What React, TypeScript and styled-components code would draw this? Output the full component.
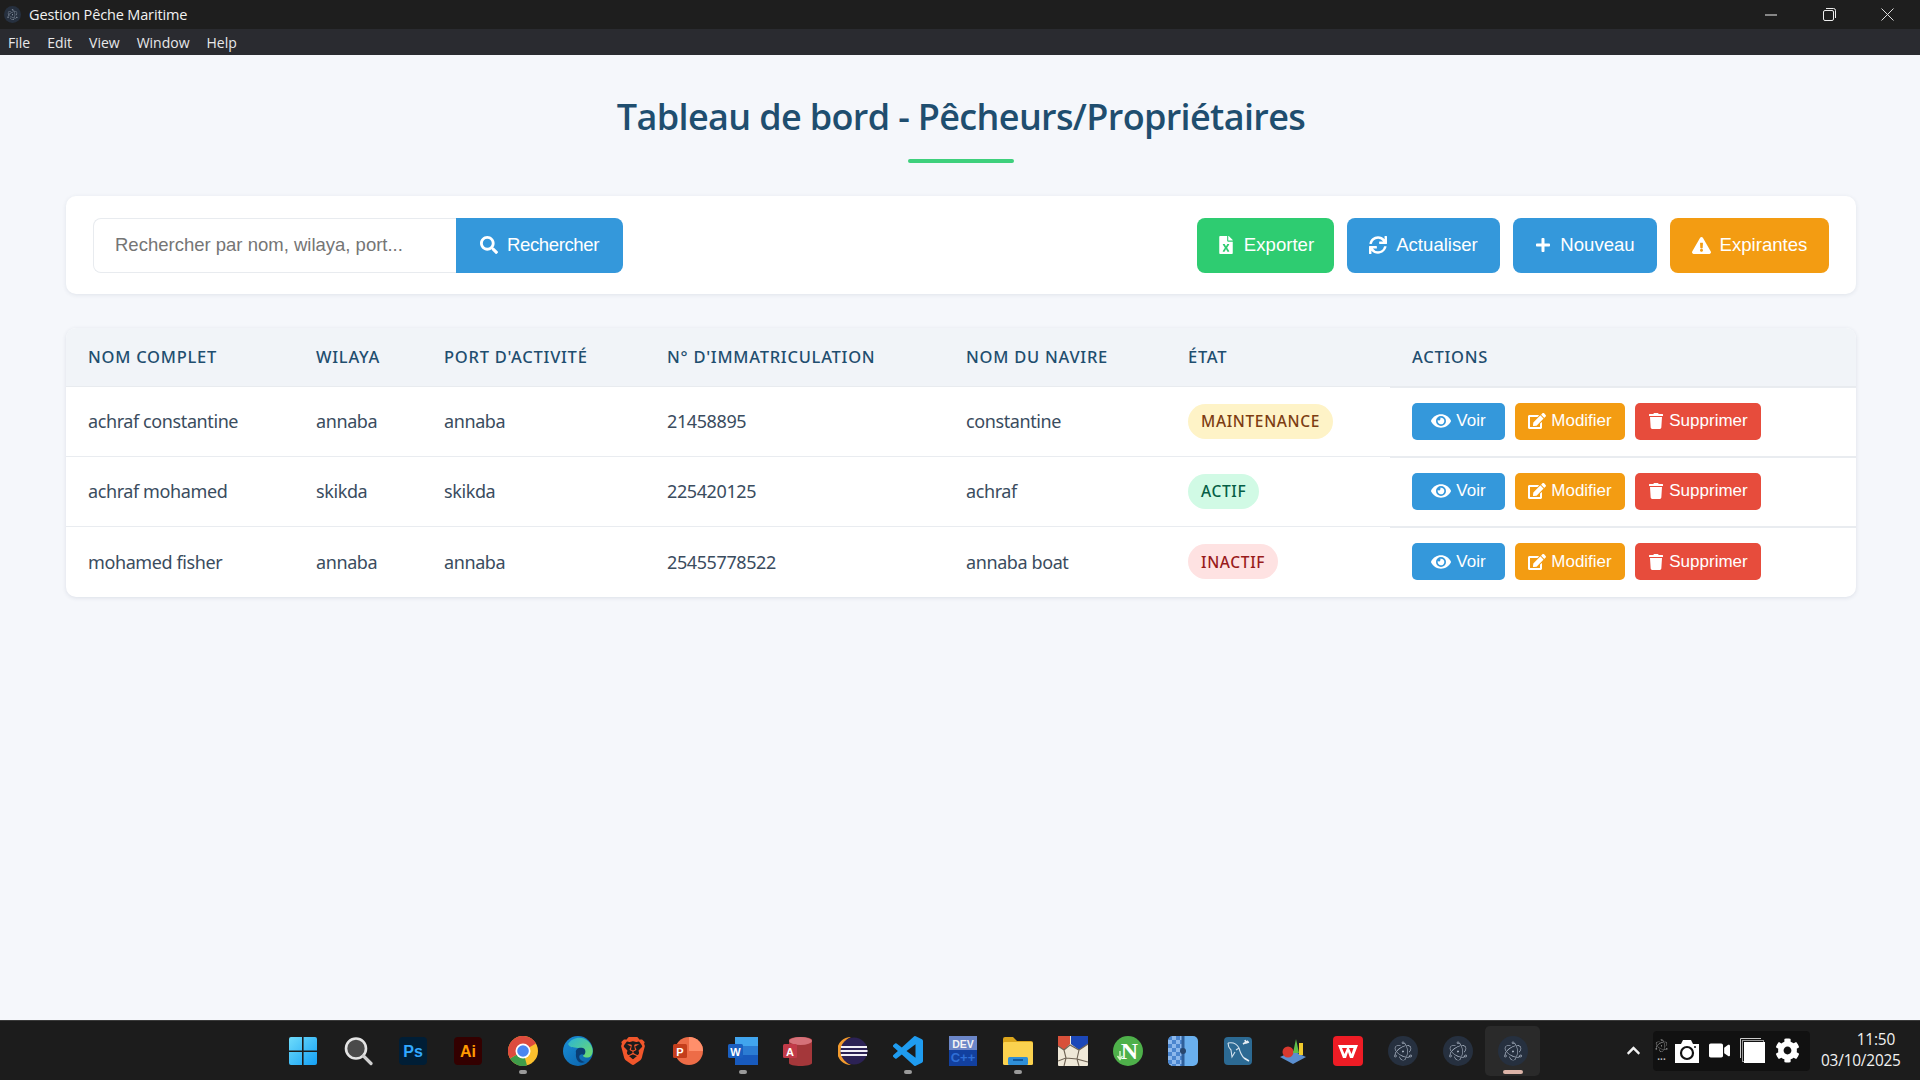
import React from "react"
import styled, { createGlobalStyle } from "styled-components"
import { FaSearch, FaFileExcel, FaSync, FaPlus, FaExclamationTriangle, FaEye, FaEdit, FaTrash, FaVideo, FaCog, FaChevronUp } from "react-icons/fa"
import { SiElectron, SiBrave } from "react-icons/si"

const colors = {
    blue: "#3498db",
    green: "#2ecc71",
    orange: "#f39c12",
    red: "#e74c3c",
    navy: "#1f4e6f",
    ink: "#3a4c5e",
}

const Global = createGlobalStyle`
    html, body { margin: 0; padding: 0; height: 100%; }
    body { background: #f5f7fb; font-family: "Noto Sans", sans-serif; }
    * { box-sizing: border-box; }
`

const Window = styled.div`
    display: flex;
    flex-direction: column;
    width: 1920px;
    height: 1080px;
    overflow: hidden;
`
const TitleBar = styled.div`
    display: flex;
    align-items: center;
    height: 29px;
    padding: 0 4px;
    background: #1e1e1e;
    color: #f2f2f2;
    font: 14.5px "Open Sans", sans-serif;
    letter-spacing: -0.15px;
`
const TitleText = styled.span`
    margin-left: 8px;
    flex: 1;
`
const WinButton = styled.div`
    display: flex;
    align-items: center;
    justify-content: center;
    width: 58px;
    height: 29px;
`
const MenuBar = styled.div`
    display: flex;
    align-items: center;
    gap: 17px;
    height: 26px;
    padding-left: 8px;
    background: #2a2b30;
    color: #e8e8ea;
    font: 14px "Open Sans", sans-serif;
`
const Main = styled.main`
    flex: 1;
    padding: 0 64px 0 66px;
    background: #f5f7fb;
`
const Heading = styled.h1`
    margin: 33px 0 33px;
    color: ${colors.navy};
    font: 600 36px/58px "Open Sans", sans-serif;
    letter-spacing: -0.65px;
    text-align: center;
    &::after {
        content: "";
        display: block;
        width: 106px;
        height: 4px;
        margin: 13px auto 0;
        border-radius: 2px;
        background: ${colors.green};
        opacity: 0.92;
    }
`
const Toolbar = styled.section`
    display: flex;
    justify-content: space-between;
    align-items: center;
    height: 98px;
    padding: 0 27px;
    margin-bottom: 34px;
    background: #fff;
    border-radius: 10px;
    box-shadow: 0 1px 4px rgba(40, 60, 90, 0.1);
`
const SearchGroup = styled.div`
    display: flex;
    height: 55px;
`
const SearchInput = styled.input`
    width: 363px;
    height: 55px;
    padding: 0 21px;
    border: 1px solid #e8ebef;
    border-right: 0;
    border-radius: 8px 0 0 8px;
    outline: none;
    font: 18.5px "Liberation Sans", sans-serif;
    color: #333;
    &::placeholder { color: #757575; opacity: 1; }
`
const ActionGroup = styled.div`
    display: flex;
    gap: 13px;
`
const ToolButton = styled.button<{ $bg: string; $w: number; $joined?: boolean }>`
    display: flex;
    align-items: center;
    justify-content: center;
    gap: 9px;
    width: ${p => p.$w}px;
    height: 55px;
    border: 0;
    border-radius: ${p => (p.$joined ? "0 8px 8px 0" : "8px")};
    background: ${p => p.$bg};
    color: #fff;
    font: 18.6px "Liberation Sans", sans-serif;
    letter-spacing: ${p => (p.$joined ? "-0.4px" : "0")};
`
const TableCard = styled.section`
    background: #fff;
    border-radius: 10px;
    overflow: hidden;
    box-shadow: 0 1px 4px rgba(40, 60, 90, 0.12);
`
const Table = styled.table`
    width: 100%;
    table-layout: fixed;
    border-collapse: collapse;
`
const HeadCell = styled.th`
    height: 58px;
    padding: 0 0 0 22px;
    background: #f1f4f8;
    border-bottom: 1px solid #e8ebef;
    color: ${colors.navy};
    font: 500 16.5px "Noto Sans", sans-serif;
    letter-spacing: 0.75px;
    text-align: left;
    text-transform: uppercase;
`
const Row = styled.tr`
    height: 70px;
    & + & td { border-top: 1px solid #e9ecf0; }
    &:last-child { height: 71px; }
`
const Cell = styled.td`
    padding: 0 0 0 22px;
    color: ${colors.ink};
    font: 18px "Noto Sans", sans-serif;
    letter-spacing: -0.4px;
`
const ActionCell = styled(Cell)`
    box-shadow: inset 0 1px 0 #e9ecf0;
`
const Badge = styled.span<{ $bg: string; $fg: string }>`
    display: inline-flex;
    align-items: center;
    height: 35px;
    padding: 0 13px;
    border-radius: 18px;
    background: ${p => p.$bg};
    color: ${p => p.$fg};
    font: 500 15.5px "Noto Sans", sans-serif;
    letter-spacing: 0.65px;
    text-transform: uppercase;
`
const RowActions = styled.div`
    display: flex;
    gap: 10px;
`
const RowButton = styled.button<{ $bg: string; $w: number }>`
    display: flex;
    align-items: center;
    justify-content: center;
    gap: 5px;
    width: ${p => p.$w}px;
    height: 37px;
    border: 0;
    border-radius: 5px;
    background: ${p => p.$bg};
    color: #fff;
    font: 17px "Liberation Sans", sans-serif;
`
const Taskbar = styled.footer`
    display: flex;
    align-items: center;
    height: 60px;
    padding-left: 275px;
    background: #1c1c1c;
    border-top: 1px solid #3a3a3a;
`
const Slot = styled.div<{ $pip?: boolean; $active?: boolean }>`
    position: relative;
    display: flex;
    align-items: center;
    justify-content: center;
    width: 55px;
    height: 50px;
    border-radius: 5px;
    background: ${p => (p.$active ? "#2a2a2a" : "transparent")};
    &::after {
        content: "";
        display: ${p => (p.$pip || p.$active ? "block" : "none")};
        position: absolute;
        bottom: 2px;
        left: 50%;
        width: ${p => (p.$active ? "20px" : "8px")};
        height: 4px;
        margin-left: ${p => (p.$active ? "-10px" : "-4px")};
        border-radius: 2px;
        background: ${p => (p.$active ? "#dcb4a8" : "#9a9a9a")};
    }
`
const Chevron = styled.div`
    display: flex;
    margin-left: 86px;
    color: #f2f2f2;
`
const Tray = styled.div`
    display: flex;
    align-items: center;
    gap: 10px;
    height: 40px;
    width: 157px;
    margin-left: 12px;
    padding: 0 2px;
    background: #111;
    border-radius: 4px;
    color: #fff;
`
const TrayMini = styled.div`
    display: flex;
    flex-direction: column;
    align-items: center;
    width: 13px;
    margin-right: -3px;
    color: #bbb;
    font: 700 10px/10px "Liberation Sans", sans-serif;
`
const Clock = styled.div`
    margin-left: 11px;
    width: 74px;
    color: #f2f2f2;
    font: 15.4px/21px "Open Sans", sans-serif;
    letter-spacing: -0.2px;
    text-align: right;
    transform: translateY(-1px);
`

const Electron = ({ size = 30 }: { size?: number }) => (
    <svg width={size} height={size} viewBox="0 0 30 30">
        <circle cx="15" cy="15" r="15" fill="#26303f" />
        <g transform="translate(5.4 5.4) scale(0.8)"><SiElectron size={24} color="#c4cedd" /></g>
    </svg>
)

const WinLogo = () => (
    <svg width="30" height="30" viewBox="0 0 30 30">
        <defs>
            <linearGradient id="wg" x1="0" y1="0" x2="1" y2="1">
                <stop offset="0" stopColor="#6fdcfb" />
                <stop offset="1" stopColor="#14a0f5" />
            </linearGradient>
        </defs>
        <path fill="url(#wg)" d="M1 3a2 2 0 0 1 2-2h11v13.4H1zM15.6 1H27a2 2 0 0 1 2 2v11.4H15.6zM1 16h13v13H3a2 2 0 0 1-2-2zM15.6 16H29v11a2 2 0 0 1-2 2H15.6z" />
    </svg>
)
const SearchGlass = () => (
    <svg width="30" height="30" viewBox="0 0 30 30">
        <circle cx="13" cy="12.5" r="10" fill="#4a4a4a" stroke="#e4e4e4" strokeWidth="2.6" />
        <path d="M20.5 20 28 27.5" stroke="#cfcfcf" strokeWidth="3.2" strokeLinecap="round" />
    </svg>
)
const AdobeTile = ({ bg, fg, label }: { bg: string; fg: string; label: string }) => (
    <svg width="28" height="28" viewBox="0 0 28 28">
        <rect width="28" height="28" rx="4" fill={bg} />
        <text x="14" y="20" textAnchor="middle" fontFamily="Liberation Sans" fontWeight="700" fontSize="16" fill={fg}>{label}</text>
    </svg>
)
const Chrome = () => (
    <svg width="30" height="30" viewBox="0 0 30 30">
        <circle cx="15" cy="15" r="15" fill="#fbc02d" />
        <path d="M15 15 2 22.5A15 15 0 0 0 19 29.5z" fill="#3f9c4a" />
        <path d="M15 15 2 22.5A15 15 0 0 1 28 7.5z" fill="#dd4b3e" />
        <circle cx="15" cy="15" r="7.5" fill="#fff" />
        <circle cx="15" cy="15" r="5.8" fill="#4a86f0" />
    </svg>
)
const Edge = () => (
    <svg width="30" height="30" viewBox="0 0 30 30">
        <defs>
            <linearGradient id="eg" x1="0" y1="0" x2="1" y2="1">
                <stop offset="0" stopColor="#1a8fd6" />
                <stop offset="1" stopColor="#0a5fa8" />
            </linearGradient>
            <linearGradient id="eh" x1="0" y1="0" x2="1" y2="1">
                <stop offset="0" stopColor="#2bb3d6" />
                <stop offset="1" stopColor="#6fdc6a" />
            </linearGradient>
        </defs>
        <circle cx="15" cy="15" r="15" fill="url(#eg)" />
        <path d="M5 8C9 1 20-1 26 6c4 5 5 10 2 14-2 2-6 2-8 0 2-2 1-7-5-8-5-1-8 0-10-4z" fill="url(#eh)" />
        <path d="M13 17c-1-4 3-6 7-5 3 1 3 5 1 7-1-1-3-1-4 0-2 2 0 6 5 7-6 3-10-3-9-9z" fill="#0a3d73" />
    </svg>
)
const Powerpoint = () => (
    <svg width="30" height="30" viewBox="0 0 30 30">
        <circle cx="16" cy="15" r="14" fill="#ed6c47" />
        <path d="M16 1a14 14 0 0 1 14 14H16z" fill="#ff8f6b" />
        <rect x="0" y="8" width="14" height="14" rx="1.5" fill="#c43e1c" />
        <text x="7" y="19.5" textAnchor="middle" fontFamily="Liberation Sans" fontWeight="700" fontSize="11" fill="#fff">P</text>
    </svg>
)
const Word = () => (
    <svg width="30" height="30" viewBox="0 0 30 30">
        <rect x="7" y="1" width="23" height="9" fill="#41a5ee" />
        <rect x="7" y="10" width="23" height="9" fill="#2b7cd3" />
        <rect x="7" y="19" width="23" height="10" fill="#185abd" />
        <rect x="0" y="8" width="15" height="14" rx="1.5" fill="#1a5fc0" />
        <text x="7.5" y="19.5" textAnchor="middle" fontFamily="Liberation Sans" fontWeight="700" fontSize="11" fill="#fff">W</text>
    </svg>
)
const Access = () => (
    <svg width="30" height="30" viewBox="0 0 30 30">
        <path d="M6 4c0-4 23-4 23 0v23c0 4-23 4-23 0z" fill="#a4373a" />
        <ellipse cx="17.5" cy="5" rx="11.5" ry="4" fill="#d6727a" />
        <rect x="0" y="8" width="14" height="14" rx="1.5" fill="#c13a48" />
        <text x="7" y="19.5" textAnchor="middle" fontFamily="Liberation Sans" fontWeight="700" fontSize="11" fill="#fff">A</text>
    </svg>
)
const Eclipse = () => (
    <svg width="30" height="30" viewBox="0 0 30 30">
        <path d="M13 1A14 14 0 0 0 13 29 15 15 0 0 1 13 1z" fill="#f39b2e" />
        <circle cx="16" cy="15" r="13.5" fill="#2c2255" />
        <path d="M3 11h26M2.5 15h27M3 19h26" stroke="#f2f0f7" strokeWidth="2" />
    </svg>
)
const VsCode = () => (
    <svg width="30" height="30" viewBox="0 0 24 24">
        <path fill="#1f9cf0" d="M23.15 2.587L18.21.21a1.494 1.494 0 0 0-1.705.29l-9.46 8.63-4.12-3.128a.999.999 0 0 0-1.276.057L.327 7.261A1 1 0 0 0 .326 8.74L3.899 12 .326 15.26a1 1 0 0 0 .001 1.479L1.65 17.94a.999.999 0 0 0 1.276.057l4.12-3.128 9.46 8.63a1.492 1.492 0 0 0 1.704.29l4.942-2.377A1.5 1.5 0 0 0 24 20.06V3.939a1.5 1.5 0 0 0-.85-1.352zm-5.146 14.861L10.826 12l7.178-5.448v10.896z" />
    </svg>
)
const DevCpp = () => (
    <svg width="28" height="30" viewBox="0 0 28 30">
        <rect width="28" height="14" fill="#6b86c8" />
        <rect y="14" width="28" height="16" fill="#12409f" />
        <text x="14" y="11.5" textAnchor="middle" fontFamily="Liberation Sans" fontWeight="700" fontSize="10.5" fill="#f4f4f4">DEV</text>
        <text x="14" y="25.5" textAnchor="middle" fontFamily="Liberation Sans" fontWeight="700" fontSize="13" fill="#2f6fd6">C++</text>
    </svg>
)
const Folder = () => (
    <svg width="30" height="28" viewBox="0 0 30 28">
        <path d="M0 2a2 2 0 0 1 2-2h8l4 4h14a2 2 0 0 1 2 2v4H0z" fill="#dca61c" />
        <rect y="5" width="30" height="23" rx="1.5" fill="#fbd24f" />
        <rect x="5" y="20" width="20" height="8" rx="1.5" fill="#2f8fd8" />
        <rect x="10" y="22" width="10" height="2" fill="#125a9c" />
    </svg>
)
const MapTile = () => (
    <svg width="30" height="30" viewBox="0 0 30 30">
        <rect width="30" height="30" rx="1" fill="#efe8d8" />
        <path d="M0 0h12v8L6 14 0 10z" fill="#d8503a" />
        <path d="M13 0h17v8l-9 6-8-6z" fill="#1c47b8" />
        <path d="M0 10 6 14 12 9l9 5 9-6M6 14l2 8-8 3M21 14l-2 9 11 3M8 22l11 1M8 22l-2 8M19 23l2 7" fill="none" stroke="#6f6355" strokeWidth="1.1" />
    </svg>
)
const Notepad = () => (
    <svg width="30" height="30" viewBox="0 0 30 30">
        <circle cx="15" cy="15" r="15" fill="#4eb04a" />
        <text x="16.5" y="23" textAnchor="middle" fontFamily="Liberation Serif" fontWeight="700" fontSize="24" fill="#fff">N</text>
        <path d="M7 15v8M4.5 20l2.500 3.500 2.500-3.500" fill="none" stroke="#d8f5c8" strokeWidth="1.4" />
    </svg>
)
const SplitTile = () => (
    <svg width="30" height="30" viewBox="0 0 30 30">
        <defs>
            <pattern id="chk" width="8" height="8" patternUnits="userSpaceOnUse">
                <rect width="8" height="8" fill="#8cb8ec" />
                <rect width="4" height="4" fill="#4b86cf" />
                <rect x="4" y="4" width="4" height="4" fill="#4b86cf" />
            </pattern>
        </defs>
        <rect width="30" height="30" rx="5" fill="#6ab0ee" />
        <path d="M5 0h9v30H5a5 5 0 0 1-5-5V5a5 5 0 0 1 5-5z" fill="url(#chk)" />
        <rect x="13.5" y="0" width="3" height="30" fill="#2f5f9a" />
        <circle cx="15" cy="15" r="3" fill="#28476e" />
    </svg>
)
const MysqlTile = () => (
    <svg width="28" height="28" viewBox="0 0 28 28">
        <rect width="28" height="28" rx="4" fill="#2c6a93" />
        <path d="M4 6c5-1 9 1 11 5 1 4 2 7 5 10M4 6c0 3 1 5 3 7l1 7 3-5M15 11l-3 2" fill="none" stroke="#d4e3ee" strokeWidth="1.1" />
        <path d="M19 7l5-3M21 3l1 3 3-1M20 21l5 3" fill="none" stroke="#e6eef4" strokeWidth="1.6" />
    </svg>
)
const ChartIcon = () => (
    <svg width="28" height="28" viewBox="0 0 28 28">
        <path d="M1 20 14 14l13 6-13 7z" fill="#5b8fd0" />
        <circle cx="9" cy="15" r="5.5" fill="#d8392f" />
        <path d="M14 16 17 2l3 14z" fill="#5fbf4a" />
        <rect x="20" y="6" width="4" height="12" fill="#f0c92c" />
    </svg>
)
const Wps = () => (
    <svg width="30" height="30" viewBox="0 0 30 30">
        <rect width="30" height="30" rx="4" fill="#ee1c25" />
        <path d="M5 9h20l-5 13h-3l-2-6-2 6h-3zM9 12l2.5 6L14 12zM16 12l2.5 6 2-6z" fill="#fff" fillRule="evenodd" />
    </svg>
)
const Camera = () => (
    <svg width="24" height="24" viewBox="0 0 24 24">
        <path d="M0 5h6l2-4h8l2 4h6v19H0z" fill="#fff" />
        <circle cx="12" cy="14" r="6" fill="#fff" stroke="#111" strokeWidth="2.2" />
        <circle cx="20" cy="8" r="1" fill="#111" />
    </svg>
)
const Overlap = () => (
    <svg width="25" height="25" viewBox="0 0 25 25">
        <path d="M.5 20V.5H21" fill="none" stroke="#ccc" strokeWidth="1" />
        <rect x="2.5" y="2.5" width="21" height="21" fill="none" stroke="#999" strokeWidth="1" />
        <rect x="4" y="4" width="21" height="21" fill="#fff" />
    </svg>
)

const rows = [
    { name: "achraf constantine", wilaya: "annaba", port: "annaba", reg: "21458895", boat: "constantine", state: "Maintenance", bg: "#fef3c7", fg: "#7c3d12" },
    { name: "achraf mohamed", wilaya: "skikda", port: "skikda", reg: "225420125", boat: "achraf", state: "Actif", bg: "#d1fae5", fg: "#065f46" },
    { name: "mohamed fisher", wilaya: "annaba", port: "annaba", reg: "25455778522", boat: "annaba boat", state: "Inactif", bg: "#fee2e2", fg: "#991b1b" },
]

const widths = [228, 128, 223, 299, 222, 224, 466]
const headers = ["Nom complet", "Wilaya", "Port d'activité", "N° d'immatriculation", "Nom du navire", "État", "Actions"]

export default function App() {
    return (
        <Window>
            <Global />
            <TitleBar>
                <Electron size={17} />
                <TitleText>Gestion Pêche Maritime</TitleText>
                <WinButton>
                    <svg width="12" height="2" viewBox="0 0 12 2"><path d="M0 1h12" stroke="#eee" strokeWidth="1" /></svg>
                </WinButton>
                <WinButton>
                    <svg width="13" height="13" viewBox="0 0 13 13" fill="none" stroke="#eee"><rect x=".5" y="2.5" width="10" height="10" rx="1.5" /><path d="M3 .5h7.5a2 2 0 0 1 2 2V10" /></svg>
                </WinButton>
                <WinButton>
                    <svg width="13" height="13" viewBox="0 0 13 13"><path d="M.5.5l12 12M12.5.5l-12 12" stroke="#ddd" strokeWidth="1" /></svg>
                </WinButton>
            </TitleBar>
            <MenuBar>
                <span>File</span>
                <span>Edit</span>
                <span>View</span>
                <span>Window</span>
                <span>Help</span>
            </MenuBar>
            <Main>
                <Heading>Tableau de bord - Pêcheurs/Propriétaires</Heading>
                <Toolbar>
                    <SearchGroup>
                        <SearchInput placeholder="Rechercher par nom, wilaya, port..." />
                        <ToolButton $bg={colors.blue} $w={167} $joined><FaSearch size={18} />Rechercher</ToolButton>
                    </SearchGroup>
                    <ActionGroup>
                        <ToolButton $bg={colors.green} $w={137}><FaFileExcel size={18} />Exporter</ToolButton>
                        <ToolButton $bg={colors.blue} $w={153}><FaSync size={18} />Actualiser</ToolButton>
                        <ToolButton $bg={colors.blue} $w={144}><FaPlus size={16} />Nouveau</ToolButton>
                        <ToolButton $bg={colors.orange} $w={159}><FaExclamationTriangle size={19} />Expirantes</ToolButton>
                    </ActionGroup>
                </Toolbar>
                <TableCard>
                    <Table>
                        <colgroup>
                            {widths.map((w, i) => <col key={i} style={{ width: w }} />)}
                        </colgroup>
                        <thead>
                            <tr>{headers.map(h => <HeadCell key={h}>{h}</HeadCell>)}</tr>
                        </thead>
                        <tbody>
                            {rows.map(r => (
                                <Row key={r.name}>
                                    <Cell>{r.name}</Cell>
                                    <Cell>{r.wilaya}</Cell>
                                    <Cell>{r.port}</Cell>
                                    <Cell>{r.reg}</Cell>
                                    <Cell>{r.boat}</Cell>
                                    <Cell><Badge $bg={r.bg} $fg={r.fg}>{r.state}</Badge></Cell>
                                    <ActionCell>
                                        <RowActions>
                                            <RowButton $bg={colors.blue} $w={93}><FaEye size={20} />Voir</RowButton>
                                            <RowButton $bg={colors.orange} $w={110}><FaEdit size={18} />Modifier</RowButton>
                                            <RowButton $bg={colors.red} $w={126}><FaTrash size={16} />Supprimer</RowButton>
                                        </RowActions>
                                    </ActionCell>
                                </Row>
                            ))}
                        </tbody>
                    </Table>
                </TableCard>
            </Main>
            <Taskbar>
                <Slot><WinLogo /></Slot>
                <Slot><SearchGlass /></Slot>
                <Slot><AdobeTile bg="#001e36" fg="#31a8ff" label="Ps" /></Slot>
                <Slot><AdobeTile bg="#330000" fg="#ff9a00" label="Ai" /></Slot>
                <Slot $pip><Chrome /></Slot>
                <Slot><Edge /></Slot>
                <Slot><SiBrave size={28} color="#f1562b" /></Slot>
                <Slot><Powerpoint /></Slot>
                <Slot $pip><Word /></Slot>
                <Slot><Access /></Slot>
                <Slot><Eclipse /></Slot>
                <Slot $pip><VsCode /></Slot>
                <Slot><DevCpp /></Slot>
                <Slot $pip><Folder /></Slot>
                <Slot><MapTile /></Slot>
                <Slot><Notepad /></Slot>
                <Slot><SplitTile /></Slot>
                <Slot><MysqlTile /></Slot>
                <Slot><ChartIcon /></Slot>
                <Slot><Wps /></Slot>
                <Slot><Electron /></Slot>
                <Slot><Electron /></Slot>
                <Slot $active><Electron /></Slot>
                <Chevron><FaChevronUp size={15} /></Chevron>
                <Tray>
                    <TrayMini><SiElectron size={13} />...</TrayMini>
                    <Camera />
                    <FaVideo size={21} />
                    <Overlap />
                    <FaCog size={25} />
                </Tray>
                <Clock>11:50<br />03/10/2025</Clock>
            </Taskbar>
        </Window>
    )
}
